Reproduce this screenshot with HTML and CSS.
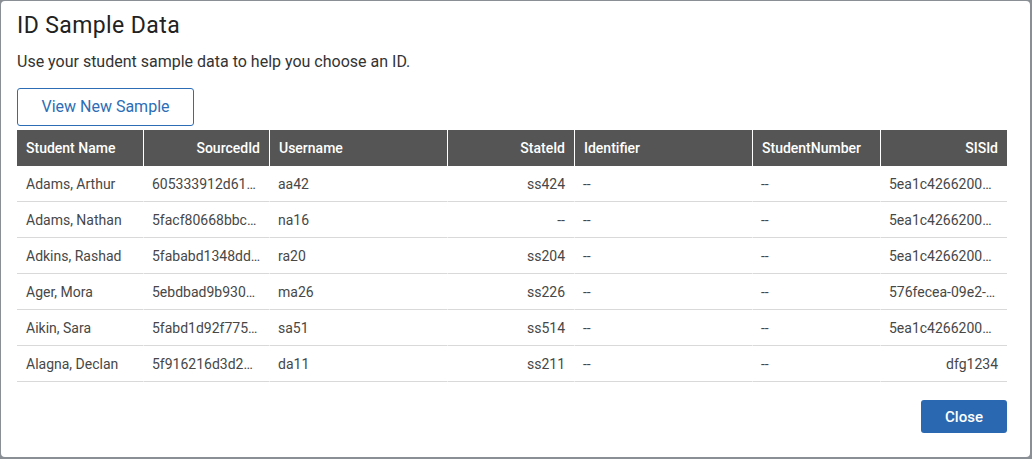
FILE: index.html
```html
<!DOCTYPE html>
<html lang="en">
<head>
<meta charset="utf-8">
<title>ID Sample Data</title>
<link rel="stylesheet" href="styles.css">
</head>
<body>
<div class="dialog">
  <h1 class="title">ID Sample Data</h1>
  <p class="subtitle">Use your student sample data to help you choose an ID.</p>
  <button class="btn-outline" type="button">View New Sample</button>
  <table class="grid">
    <colgroup>
      <col class="c-name"><col class="c-narrow"><col class="c-wide"><col class="c-narrow2"><col class="c-wide"><col class="c-narrow3"><col class="c-narrow2">
    </colgroup>
    <thead>
      <tr>
        <th>Student Name</th>
        <th class="r">SourcedId</th>
        <th>Username</th>
        <th class="r">StateId</th>
        <th>Identifier</th>
        <th>StudentNumber</th>
        <th class="r">SISId</th>
      </tr>
    </thead>
    <tbody>
      <tr>
        <td>Adams, Arthur</td>
        <td>605333912d61…</td>
        <td>aa42</td>
        <td class="r">ss424</td>
        <td>--</td>
        <td>--</td>
        <td>5ea1c4266200…</td>
      </tr>
      <tr>
        <td>Adams, Nathan</td>
        <td>5facf80668bbc…</td>
        <td>na16</td>
        <td class="r">--</td>
        <td>--</td>
        <td>--</td>
        <td>5ea1c4266200…</td>
      </tr>
      <tr>
        <td>Adkins, Rashad</td>
        <td>5fababd1348dd…</td>
        <td>ra20</td>
        <td class="r">ss204</td>
        <td>--</td>
        <td>--</td>
        <td>5ea1c4266200…</td>
      </tr>
      <tr>
        <td>Ager, Mora</td>
        <td>5ebdbad9b930…</td>
        <td>ma26</td>
        <td class="r">ss226</td>
        <td>--</td>
        <td>--</td>
        <td>576fecea-09e2-…</td>
      </tr>
      <tr>
        <td>Aikin, Sara</td>
        <td>5fabd1d92f775…</td>
        <td>sa51</td>
        <td class="r">ss514</td>
        <td>--</td>
        <td>--</td>
        <td>5ea1c4266200…</td>
      </tr>
      <tr>
        <td>Alagna, Declan</td>
        <td>5f916216d3d2…</td>
        <td>da11</td>
        <td class="r">ss211</td>
        <td>--</td>
        <td>--</td>
        <td class="r">dfg1234</td>
      </tr>
    </tbody>
  </table>
  <div class="footer">
    <button class="btn-primary" type="button">Close</button>
  </div>
</div>
</body>
</html>
```

FILE: styles.css
```css
html, body {
  margin: 0;
  padding: 0;
}
body {
  background: #8a8f96;
  font-family: Roboto, "Liberation Sans", Arial, sans-serif;
  width: 1032px;
  height: 459px;
  overflow: hidden;
}
.dialog {
  box-sizing: border-box;
  margin: 1px 2px 0 1px;
  width: 1029px;
  height: 456px;
  background: #ffffff;
  border-radius: 4px;
  padding: 12px 23px 0 16px;
}
.title {
  margin: 0;
  font-size: 23px;
  line-height: 26px;
  font-weight: 400;
  letter-spacing: 0.4px;
  color: #222222;
}
.subtitle {
  margin: 13px 0 0 0;
  font-size: 16px;
  line-height: 19px;
  color: #333333;
}
.btn-outline {
  display: block;
  box-sizing: border-box;
  margin-top: 17px;
  width: 177px;
  height: 38px;
  padding: 0;
  border: 1px solid #2d6db5;
  border-radius: 3px;
  background: #ffffff;
  color: #2d6db5;
  font-family: inherit;
  font-size: 16px;
  line-height: 20px;
}
.grid {
  margin-top: 4px;
  width: 990px;
  table-layout: fixed;
  border-collapse: separate;
  border-spacing: 0;
  font-size: 14px;
}
.c-name { width: 126px; }
.c-narrow { width: 126px; }
.c-wide { width: 178px; }
.c-narrow2 { width: 127px; }
.c-narrow3 { width: 128px; }
.grid th {
  height: 36px;
  padding: 0 9px;
  background: #555555;
  color: #ffffff;
  font-weight: 500;
  text-align: left;
  white-space: nowrap;
  border-left: 1px solid #ffffff;
}
.grid th:first-child,
.grid td:first-child {
  border-left: none;
}
.grid td {
  height: 35px;
  padding: 0 4px 0 8px;
  color: #474747;
  border-left: 1px solid transparent;
  border-bottom: 1px solid #d9d9d9;
  white-space: nowrap;
}
.grid td:first-child {
  padding-left: 9px;
}
.grid .r {
  text-align: right;
  padding-right: 9px;
}
.footer {
  display: flex;
  justify-content: flex-end;
  margin-top: 18px;
}
.btn-primary {
  box-sizing: border-box;
  width: 86px;
  height: 33px;
  padding: 0;
  border: none;
  border-radius: 3px;
  background: #2a69b1;
  color: #ffffff;
  font-family: inherit;
  font-size: 15px;
  font-weight: 500;
}
```
